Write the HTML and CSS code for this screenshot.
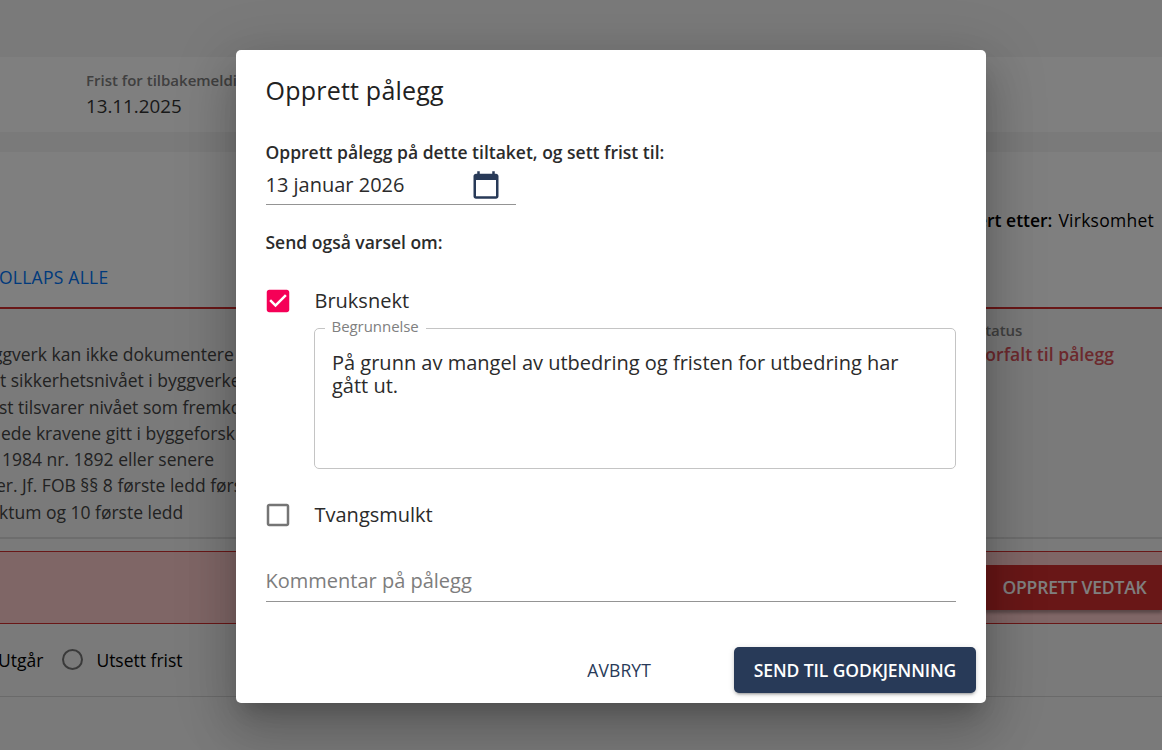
FILE: index.html
```
<!DOCTYPE html>
<html lang="no">
<head>
<meta charset="utf-8">
<title>Opprett pålegg</title>
<link rel="stylesheet" href="styles.css">
</head>
<body>
<main class="page">
  <section class="summary">
    <span class="label">Frist for tilbakemelding</span>
    <span class="value">13.11.2025</span>
  </section>
  <section class="toolbar">
    <div class="sorting"><b>Sortert etter:</b><span>Virksomhet</span></div>
    <a class="collapse">KOLLAPS ALLE</a>
  </section>
  <section class="deviation">
    <div class="description">
      <p class="l1">ggverk kan ikke dokumentere</p>
      <p class="l2">t sikkerhetsnivået i byggverket</p>
      <p class="l3">st tilsvarer nivået som fremkommer</p>
      <p class="l4">ede kravene gitt i byggeforskrift</p>
      <p class="l5">1984 nr. 1892 eller senere</p>
      <p class="l6">er. Jf. FOB §§ 8 første ledd første</p>
      <p class="l7">ktum og 10 første ledd</p>
    </div>
    <div class="status">
      <span class="label">Status</span>
      <strong>Forfalt til pålegg</strong>
    </div>
  </section>
  <section class="decision"><button class="decide">OPPRETT VEDTAK</button></section>
  <section class="choices">
    <span>Utgår</span><i class="radio"></i><span>Utsett frist</span>
  </section>
</main>

<div class="backdrop">
  <div class="dialog" role="dialog">
    <h2 class="title">Opprett pålegg</h2>
    <p class="lead first">Opprett pålegg på dette tiltaket, og sett frist til:</p>
    <div class="date">
      <span>13 januar 2026</span>
      <svg class="icon" viewBox="0 0 24 24"><path fill="#283a58" d="M20 3h-1V1h-2v2H7V1H5v2H4c-1.100 0-2 .9-2 2v16c0 1.100.9 2 2 2h16c1.100 0 2-.9 2-2V5c0-1.100-.9-2-2-2zm0 18H4V8h16v13z"/></svg>
    </div>
    <p class="lead second">Send også varsel om:</p>
    <label class="check">
      <svg class="icon" viewBox="0 0 24 24"><path fill="#f50057" d="M19 3H5c-1.110 0-2 .9-2 2v14c0 1.100.89 2 2 2h14c1.110 0 2-.9 2-2V5c0-1.100-.89-2-2-2zm-9 14l-5-5 1.410-1.410L10 14.170l7.590-7.590L19 8l-9 9z"/></svg>
      <span>Bruksnekt</span>
    </label>
    <fieldset class="reason">
      <legend>Begrunnelse</legend>
      <p>På grunn av mangel av utbedring og fristen for utbedring har gått ut.</p>
    </fieldset>
    <label class="check">
      <svg class="icon" viewBox="0 0 24 24"><path fill="#757575" d="M19 5v14H5V5h14m0-2H5c-1.100 0-2 .9-2 2v14c0 1.100.9 2 2 2h14c1.100 0 2-.9 2-2V5c0-1.100-.9-2-2-2z"/></svg>
      <span>Tvangsmulkt</span>
    </label>
    <div class="comment">Kommentar på pålegg</div>
    <div class="actions">
      <button class="cancel">AVBRYT</button>
      <button class="send">SEND TIL GODKJENNING</button>
    </div>
  </div>
</div>
</body>
</html>
```
FILE: styles.css
```
* { box-sizing: border-box; }
body {
  margin: 0;
  width: 1162px;
  height: 750px;
  overflow: hidden;
  position: relative;
  font-family: "Open Sans", "Noto Sans", sans-serif;
  font-size: 17.5px;
  color: #000;
}
p, h2 { margin: 0; }
button { font: inherit; border: 0; padding: 0; }
.page {
  height: 750px;
  background: #f4f4f4;
  padding-top: 57px;
  overflow: hidden;
  white-space: nowrap;
}
.label { font-size: 15px; line-height: 20px; font-weight: 600; color: #808080; }
.summary {
  height: 75px;
  background: #fff;
  padding: 13px 0 0 86px;
  display: flex;
  flex-direction: column;
}
.value { font-size: 18.75px; line-height: 31px; color: #333; }
.toolbar {
  margin-top: 20px;
  height: 155px;
  background: #fff;
  padding: 56px 8px 0 0;
}
.sorting { display: flex; justify-content: flex-end; gap: 6px; line-height: 24px; }
.sorting b { font-weight: 600; }
.sorting span { letter-spacing: .25px; }
.collapse { display: block; margin: 33px 0 0 -12px; line-height: 24px; letter-spacing: .25px; color: #0074f8; }
.deviation {
  display: flex;
  justify-content: space-between;
  height: 232px;
  border-top: 2px solid #d32f2f;
  border-bottom: 2px solid #dadada;
  color: #444;
}
.description { padding-top: 32px; line-height: 26.25px; }
.l1 { margin-left: -7px; }
.l3 { margin-left: -1px; }
.l4 { margin-left: 1px; }
.l5 { margin-left: 2px; }
.l6 { margin-left: -4px; }
.l7 { margin-left: -1px; }
.status { width: 186px; padding-top: 11px; display: flex; flex-direction: column; }
.status .label { padding-left: 1px; letter-spacing: -.05px; }
.status strong { font-weight: 600; line-height: 28px; letter-spacing: .05px; color: #d9535a; }
.decision {
  margin-top: 12px;
  height: 73px;
  border: solid #d32f2f;
  border-width: 1px 0;
  background: #fcc;
  padding-top: 13px;
  display: flex;
  justify-content: flex-end;
}
.decide {
  width: 190px;
  height: 45px;
  padding: 0 0 2px 15px;
  background: #d32f2f;
  color: #fff;
  font-weight: 600;
  letter-spacing: -.18px;
  box-shadow: 0 3px 3px rgba(0,0,0,.3);
}
.choices {
  height: 73px;
  border-bottom: 1px solid #d5d5d5;
  display: flex;
  align-items: center;
  margin-left: -2px;
}
.radio { width: 21px; height: 21px; border: 2px solid #757575; border-radius: 50%; margin: -2px 13px 0 19px; }

.backdrop {
  position: absolute;
  inset: 0;
  background: rgba(0,0,0,.5);
  padding: 50px 0 0 236px;
}
.dialog {
  width: 750px;
  height: 653px;
  background: #fff;
  border-radius: 5px;
  padding: 23px 30px 0;
  color: #2b2b2b;
  font-size: 20px;
  letter-spacing: 0;
  box-shadow: 0 14px 19px -9px rgba(0,0,0,.2), 0 30px 48px 4px rgba(0,0,0,.14), 0 11px 58px 10px rgba(0,0,0,.12);
}
.title { font-size: 25px; line-height: 34px; font-weight: 500; letter-spacing: .22px; color: #212121; }
.lead { font-size: 17.5px; line-height: 24px; font-weight: 600; letter-spacing: 0; }
.first { margin-top: 33px; }
.title, .lead, .date span, .comment { text-indent: -.5px; }
.icon { width: 30px; height: 30px; flex: none; }
.date {
  width: 250px;
  height: 41px;
  border-bottom: 1px solid #949494;
  display: flex;
  align-items: center;
  justify-content: space-between;
  padding: 1px 15px 0 0;
}
.second { margin-top: 25px; }
.check { display: flex; align-items: center; gap: 21.5px; height: 30px; margin-left: -3px; }
.check span { padding-bottom: 2px; }
.second + .check { margin-top: 32px; }
.reason {
  margin: 0 0 31px 48px;
  height: 153px;
  min-width: 0;
  border: 1px solid #c4c4c4;
  border-radius: 5px;
  padding: 11px 17px 0;
}
.reason legend {
  margin-left: -7px;
  padding: 0 7px 4px;
  font-size: 15px;
  line-height: 20px;
  letter-spacing: -.05px;
  text-indent: -.5px;
  color: #808080;
}
.reason p { line-height: 23px; }
.comment { height: 72px; padding-top: 37px; line-height: 28px; color: #7d7d7d; border-bottom: 1px solid #949494; }
.actions {
  display: flex;
  justify-content: flex-end;
  align-items: center;
  gap: 73px;
  margin: 45px -20px 0 0;
  font-size: 17.5px;
  letter-spacing: 0;
}
.cancel { background: none; padding: 0 10px; color: #283a58; letter-spacing: .1px; }
.send {
  width: 242px;
  height: 46px;
  border-radius: 5px;
  background: #283a58;
  color: #fff;
  font-weight: 600;
  letter-spacing: -.1px;
  box-shadow: 0 4px 2px -3px rgba(0,0,0,.2), 0 2px 3px rgba(0,0,0,.14), 0 1px 6px rgba(0,0,0,.12);
}
```
